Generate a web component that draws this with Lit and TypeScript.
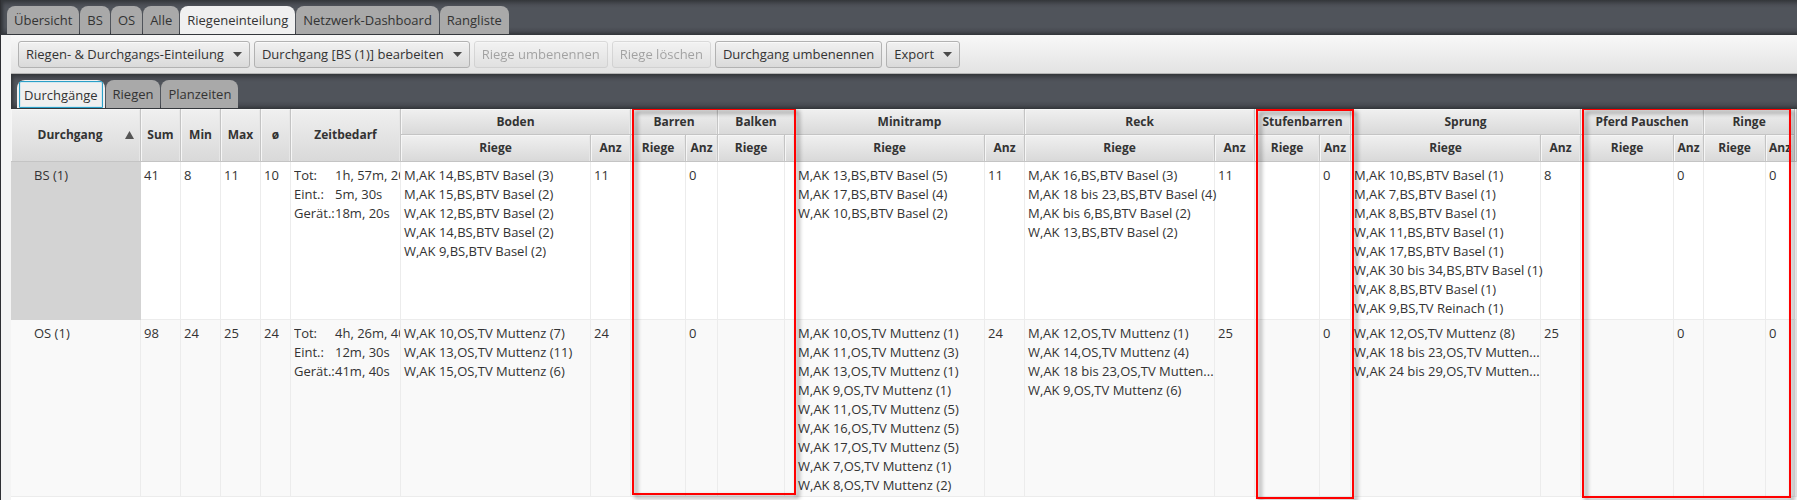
import { LitElement, html, css } from "lit";
import { customElement, state } from "lit/decorators.js";

interface Station {
  name: string;
  widths: [number, number];
}

interface StationCell {
  riegen: string[];
  anz: string;
}

interface Durchgang {
  name: string;
  stats: string[];
  zeiten: [string, string][];
  cells: StationCell[];
}

const BASE_COLUMNS: { name: string; width: number }[] = [
  { name: "Durchgang", width: 130 },
  { name: "Sum", width: 40 },
  { name: "Min", width: 40 },
  { name: "Max", width: 40 },
  { name: "ø", width: 30 },
  { name: "Zeitbedarf", width: 110 },
];

const STATIONS: Station[] = [
  { name: "Boden", widths: [190, 40] },
  { name: "Barren", widths: [55, 32] },
  { name: "Balken", widths: [67, 10] },
  { name: "Minitramp", widths: [190, 40] },
  { name: "Reck", widths: [190, 40] },
  { name: "Stufenbarren", widths: [65, 31] },
  { name: "Sprung", widths: [190, 40] },
  { name: "Pferd Pauschen", widths: [93, 30] },
  { name: "Ringe", widths: [62, 29] },
];

const NONE: StationCell = { riegen: [], anz: "0" };
const HIDDEN: StationCell = { riegen: [], anz: "" };

const ROWS: Durchgang[] = [
  {
    name: "BS (1)",
    stats: ["41", "8", "11", "10"],
    zeiten: [
      ["Tot:", "1h, 57m, 20s"],
      ["Eint.:", "5m, 30s"],
      ["Gerät.:", "18m, 20s"],
    ],
    cells: [
      {
        riegen: [
          "M,AK 14,BS,BTV Basel (3)",
          "M,AK 15,BS,BTV Basel (2)",
          "W,AK 12,BS,BTV Basel (2)",
          "W,AK 14,BS,BTV Basel (2)",
          "W,AK 9,BS,BTV Basel (2)",
        ],
        anz: "11",
      },
      NONE,
      HIDDEN,
      {
        riegen: ["M,AK 13,BS,BTV Basel (5)", "M,AK 17,BS,BTV Basel (4)", "W,AK 10,BS,BTV Basel (2)"],
        anz: "11",
      },
      {
        riegen: [
          "M,AK 16,BS,BTV Basel (3)",
          "M,AK 18 bis 23,BS,BTV Basel (4)",
          "M,AK bis 6,BS,BTV Basel (2)",
          "W,AK 13,BS,BTV Basel (2)",
        ],
        anz: "11",
      },
      NONE,
      {
        riegen: [
          "M,AK 10,BS,BTV Basel (1)",
          "M,AK 7,BS,BTV Basel (1)",
          "M,AK 8,BS,BTV Basel (1)",
          "W,AK 11,BS,BTV Basel (1)",
          "W,AK 17,BS,BTV Basel (1)",
          "W,AK 30 bis 34,BS,BTV Basel (1)",
          "W,AK 8,BS,BTV Basel (1)",
          "W,AK 9,BS,TV Reinach (1)",
        ],
        anz: "8",
      },
      NONE,
      NONE,
    ],
  },
  {
    name: "OS (1)",
    stats: ["98", "24", "25", "24"],
    zeiten: [
      ["Tot:", "4h, 26m, 40s"],
      ["Eint.:", "12m, 30s"],
      ["Gerät.:", "41m, 40s"],
    ],
    cells: [
      {
        riegen: ["W,AK 10,OS,TV Muttenz (7)", "W,AK 13,OS,TV Muttenz (11)", "W,AK 15,OS,TV Muttenz (6)"],
        anz: "24",
      },
      NONE,
      HIDDEN,
      {
        riegen: [
          "M,AK 10,OS,TV Muttenz (1)",
          "M,AK 11,OS,TV Muttenz (3)",
          "M,AK 13,OS,TV Muttenz (1)",
          "M,AK 9,OS,TV Muttenz (1)",
          "W,AK 11,OS,TV Muttenz (5)",
          "W,AK 16,OS,TV Muttenz (5)",
          "W,AK 17,OS,TV Muttenz (5)",
          "W,AK 7,OS,TV Muttenz (1)",
          "W,AK 8,OS,TV Muttenz (2)",
        ],
        anz: "24",
      },
      {
        riegen: [
          "M,AK 12,OS,TV Muttenz (1)",
          "W,AK 14,OS,TV Muttenz (4)",
          "W,AK 18 bis 23,OS,TV Mutten...",
          "W,AK 9,OS,TV Muttenz (6)",
        ],
        anz: "25",
      },
      NONE,
      {
        riegen: [
          "W,AK 12,OS,TV Muttenz (8)",
          "W,AK 18 bis 23,OS,TV Mutten...",
          "W,AK 24 bis 29,OS,TV Mutten...",
        ],
        anz: "25",
      },
      NONE,
      NONE,
    ],
  },
];

@customElement("durchgang-table")
class DurchgangTable extends LitElement {
  static styles = css`
    :host {
      display: block;
      position: relative;
      flex: 1;
      overflow: hidden;
      background: #fff;
    }
    .grid {
      width: 100%;
      table-layout: fixed;
      border-collapse: separate;
      border-spacing: 0;
    }
    th {
      box-sizing: border-box;
      height: 26px;
      padding: 0;
      font-size: 12px;
      font-weight: 700;
      line-height: 18px;
      text-align: center;
      white-space: nowrap;
      overflow: hidden;
      border-right: 1px solid #c4c4c4;
      border-bottom: 1px solid #c4c4c4;
      background: linear-gradient(#f0f0f0, #d9d9d9);
      box-shadow: inset 1px 1px 0 #f6f6f6, inset -1px 0 0 #e6e6e6;
    }
    .sub {
      height: 27px;
    }
    .sorted {
      display: grid;
      grid-template-columns: 1fr 9px;
      align-items: center;
      padding: 0 6px 0 4px;
    }
    .arrow {
      display: block;
      width: 9px;
      height: 8px;
      fill: #555;
    }
    td {
      box-sizing: border-box;
      padding: 4px 0 1px 3px;
      line-height: 19px;
      vertical-align: top;
      white-space: nowrap;
      border-right: 1px solid #ececec;
      border-bottom: 1px solid #ececec;
    }
    .even td {
      background: #f9f9f9;
    }
    td.name {
      padding-left: 23px;
    }
    .selected .name {
      background: #d3d3d3;
      border-color: #d3d3d3;
    }
    .zeit {
      overflow: hidden;
    }
    .label {
      display: inline-block;
      width: 41px;
    }
    .mark {
      position: absolute;
      box-sizing: border-box;
      border: 2px solid #f00;
      filter: drop-shadow(3px 3px 2px rgba(0, 0, 0, 0.5));
      pointer-events: none;
    }
    .mark-barren {
      left: 621px;
      top: -1px;
      width: 164px;
      height: 387px;
    }
    .mark-stufen {
      left: 1245px;
      top: 0;
      width: 98px;
      height: 390px;
    }
    .mark-pferd {
      left: 1571px;
      top: -1px;
      width: 209px;
      height: 390px;
    }
  `;

  render() {
    return html`
      <table class="grid">
        <colgroup>
          ${BASE_COLUMNS.map((c) => html`<col style="width:${c.width}px" />`)}
          ${STATIONS.map((s) => s.widths.map((w) => html`<col style="width:${w}px" />`))}
          <col />
        </colgroup>
        <thead>
          <tr>
            ${BASE_COLUMNS.map((c, i) =>
              i === 0
                ? html`<th rowspan="2" scope="col" aria-sort="ascending">
                    <div class="sorted">
                      <span>${c.name}</span>
                      <svg class="arrow" viewBox="0 0 9 8" aria-hidden="true"><path d="M4.5 0 9 8H0z" /></svg>
                    </div>
                  </th>`
                : html`<th rowspan="2" scope="col">${c.name}</th>`
            )}
            ${STATIONS.map((s) => html`<th colspan="2" scope="colgroup">${s.name}</th>`)}
            <th rowspan="2"></th>
          </tr>
          <tr>
            ${STATIONS.map(
              (s) => html`
                <th class="sub" scope="col">Riege</th>
                <th class="sub" scope="col">${s.widths[1] > 20 ? "Anz" : ""}</th>
              `
            )}
          </tr>
        </thead>
        <tbody>
          ${ROWS.map(
            (r, i) => html`
              <tr class=${i === 0 ? "selected" : "even"}>
                <td class="name">${r.name}</td>
                ${r.stats.map((v) => html`<td>${v}</td>`)}
                <td>
                  <div class="zeit">
                    ${r.zeiten.map(([k, v]) => html`<div><span class="label">${k}</span>${v}</div>`)}
                  </div>
                </td>
                ${r.cells.map(
                  (c) => html`
                    <td>${c.riegen.map((t) => html`<div>${t}</div>`)}</td>
                    <td>${c.anz}</td>
                  `
                )}
                <td></td>
              </tr>
            `
          )}
        </tbody>
      </table>
      <div class="mark mark-barren"></div>
      <div class="mark mark-stufen"></div>
      <div class="mark mark-pferd"></div>
    `;
  }
}

@customElement("tab-strip")
class TabStrip extends LitElement {
  static properties = {
    tabs: { attribute: false },
    active: { type: Number },
    ring: { type: Boolean },
  };
  declare tabs: string[];
  declare active: number;
  declare ring: boolean;

  static styles = css`
    :host {
      display: block;
    }
    .strip {
      box-sizing: border-box;
      display: flex;
      align-items: flex-end;
      gap: 1px;
      height: 35px;
      padding: 0 6px 1px;
      background: linear-gradient(#34373b, #4b4e55 5px, #50545b 8px, #50545b 27px, #484b52 31px, #33363a);
      box-shadow: inset 3px 0 3px -1px #34373b;
    }
    .tab {
      box-sizing: border-box;
      height: 28px;
      padding: 0 7px;
      border: 0;
      border-radius: 8px 8px 0 0;
      background: #a9a9a9;
      color: #333;
      font: inherit;
      line-height: 20px;
      white-space: nowrap;
    }
    .active {
      background: #f0f0f0;
    }
    .ring {
      height: 27px;
      border: 1px solid #2ba0c8;
      border-radius: 2px 2px 0 0;
      padding: 0 4px;
      box-shadow: inset 0 0 0 1px #d5e8ef;
    }
    .frame {
      display: flex;
      padding: 1px 2px 0;
      border-radius: 8px 8px 0 0;
      background: #f0f0f0;
    }
  `;

  render() {
    return html`
      <div class="strip" role="tablist">
        ${this.tabs.map((t, i) => {
          const on = i === this.active;
          if (on && this.ring) {
            return html`<div class="frame">
              <button class="tab active ring" role="tab" aria-selected="true" @click=${() => this.pick(i)}>${t}</button>
            </div>`;
          }
          return html`<button
            class="tab ${on ? "active" : ""}"
            role="tab"
            aria-selected=${on ? "true" : "false"}
            @click=${() => this.pick(i)}
          >${t}</button>`;
        })}
      </div>
    `;
  }

  private pick(i: number) {
    this.active = i;
  }
}

@customElement("app-root")
class AppRoot extends LitElement {
  @state() private actions = [
    { text: "Riegen- & Durchgangs-Einteilung", menu: true, off: false },
    { text: "Durchgang [BS (1)] bearbeiten", menu: true, off: false },
    { text: "Riege umbenennen", menu: false, off: true },
    { text: "Riege löschen", menu: false, off: true },
    { text: "Durchgang umbenennen", menu: false, off: false },
    { text: "Export", menu: true, off: false },
  ];

  static styles = css`
    :host {
      box-sizing: border-box;
      display: flex;
      flex-direction: column;
      min-height: 100vh;
      overflow: hidden;
      border-left: 1px solid #2e2f33;
      background: #f4f4f4;
      color: #333;
      font-family: "Open Sans", "Noto Sans", sans-serif;
      font-size: 13px;
    }
    .content {
      display: flex;
      flex: 1;
      flex-direction: column;
      min-width: 0;
      margin-left: 10px;
    }
    .toolbar {
      box-sizing: border-box;
      display: flex;
      align-items: center;
      gap: 4px;
      height: 39px;
      padding: 0 7px;
      border-bottom: 1px solid #b5b5b5;
      background: linear-gradient(#f8f8f8, #e3e3e3);
    }
    .btn {
      box-sizing: border-box;
      display: flex;
      align-items: center;
      gap: 9px;
      height: 27px;
      padding: 0 7px;
      border: 1px solid #b2b2b2;
      border-radius: 3px;
      background: linear-gradient(#f1f1f1, #dadada);
      box-shadow: inset 0 1px 0 #fafafa;
      color: #333;
      font: inherit;
      white-space: nowrap;
    }
    .btn:disabled {
      opacity: 0.4;
    }
    .caret {
      width: 9px;
      height: 5px;
      fill: #4a4a4a;
    }
  `;

  render() {
    return html`
      <tab-strip
        .tabs=${["Übersicht", "BS", "OS", "Alle", "Riegeneinteilung", "Netzwerk-Dashboard", "Rangliste"]}
        .active=${4}
      ></tab-strip>
      <main class="content">
        <div class="toolbar" role="toolbar">
          ${this.actions.map(
            (a) => html`<button class="btn" ?disabled=${a.off}>
              <span>${a.text}</span>
              ${a.menu
                ? html`<svg class="caret" viewBox="0 0 9 5" aria-hidden="true"><path d="M0 0h9L4.5 5z" /></svg>`
                : ""}
            </button>`
          )}
        </div>
        <tab-strip .tabs=${["Durchgänge", "Riegen", "Planzeiten"]} .active=${0} .ring=${true}></tab-strip>
        <durchgang-table></durchgang-table>
      </main>
    `;
  }
}
